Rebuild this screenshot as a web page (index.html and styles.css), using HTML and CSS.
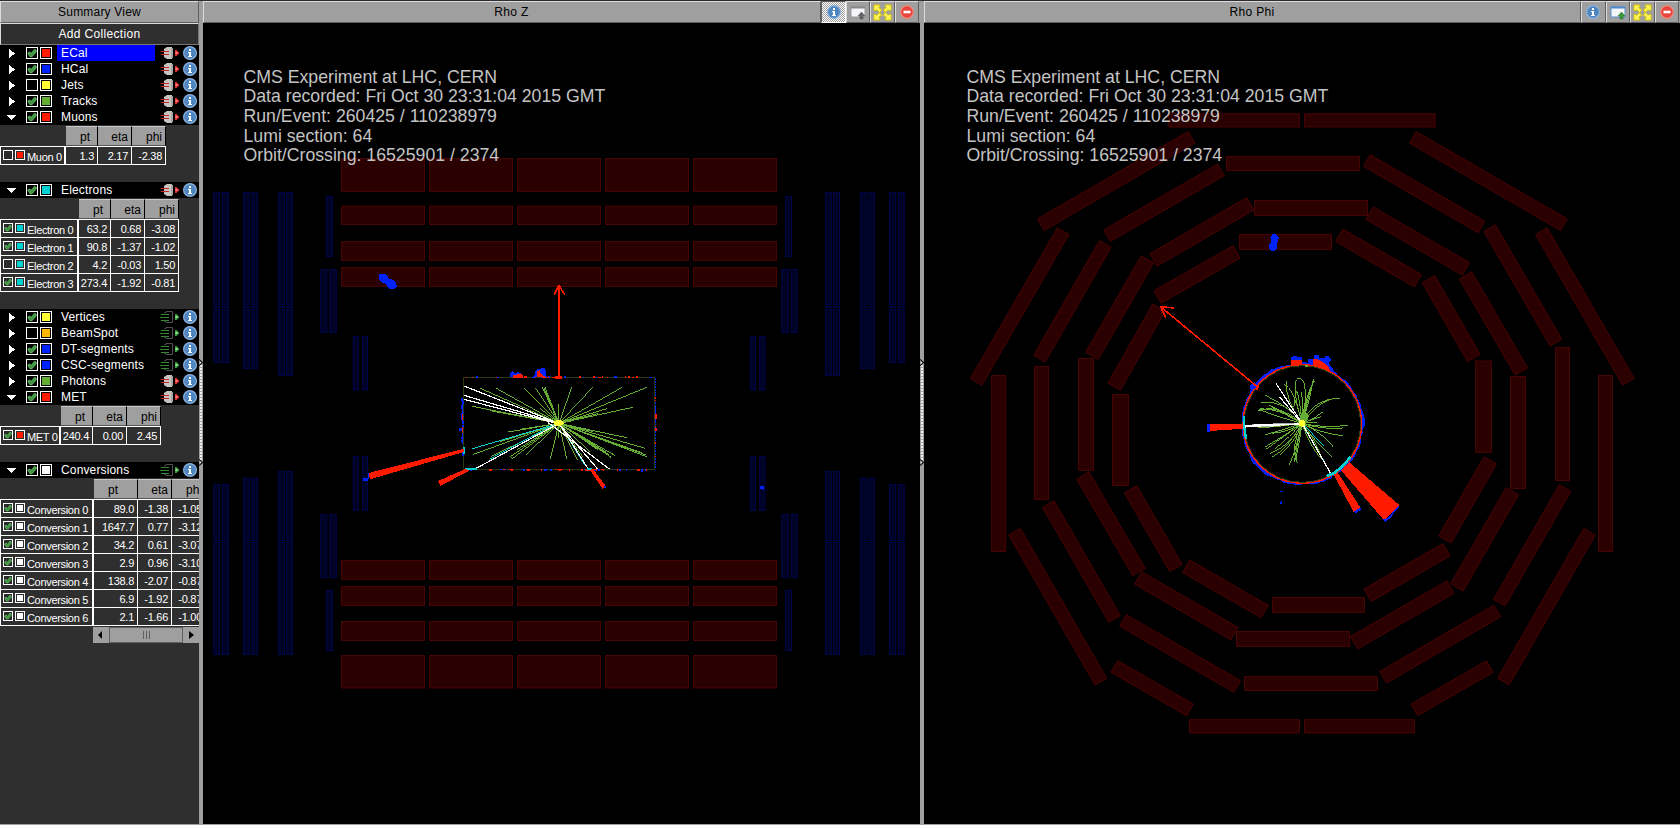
FILE: index.html
```html
<!DOCTYPE html>
<html lang="en">
<head>
<meta charset="utf-8">
<title>Event Display</title>
<link rel="stylesheet" href="styles.css">
</head>
<body>
<div class="app">
  <aside class="sidebar">
    <div class="bar title">Summary View</div>
    <button class="bar add">Add Collection</button>
    <div id="collections"></div>
  </aside>
  <div class="divider"><i class="grip"></i></div>
  <section class="pane pane-z">
    <header class="head"><span class="bar name">Rho Z</span><span class="tools" data-pressed="1"></span></header>
    <svg class="view" id="rhoz" viewBox="203 23 717 801"></svg>
  </section>
  <div class="divider"><i class="grip"></i></div>
  <section class="pane pane-phi">
    <header class="head"><span class="bar name">Rho Phi</span><span class="tools"></span></header>
    <svg class="view" id="rhophi" viewBox="924 23 756 801"></svg>
  </section>
</div>
<script src="app.js"></script>
</body>
</html>
```
FILE: styles.css
```css
* { box-sizing: border-box; }
body { margin: 0; background: #000; overflow: hidden; font: 12px/16px "Liberation Sans", Arial, sans-serif; }
.app { display: flex; width: 1680px; height: 825px; border-top: 1px solid #2f2b2f; border-bottom: 1px solid #9f9f9f; }
.sidebar { width: 199px; overflow: hidden; background: #2f2f2f; color: #fff; }
.bar { display: block; height: 22px; border: 1px solid; border-color: #dcdcdc #5f5f5f #5f5f5f #dcdcdc; background: #9f9f9f; color: #000; text-align: center; line-height: 20px; letter-spacing: .2px; }
.add { width: 199px; padding: 0; font: inherit; background: #2f2f2f; color: #fff; line-height: 19px; letter-spacing: .33px; border-color: #dcdcdc #777 #777 #dcdcdc; }
.divider { position: relative; width: 4px; background: #9f9f9f; }
.grip { position: absolute; left: 0; top: 361px; width: 4px; height: 101px; background: radial-gradient(circle at 1px 1px, #eee 0 .8px, transparent 1px) 1px 0 / 4px 3px; }
.grip::before, .grip::after { content: ""; position: absolute; left: -2px; width: 4px; height: 4px; border: 1px solid #000; border-width: 1px 1px 0 0; transform: rotate(45deg); }
.grip::before { top: -2px; }
.grip::after { bottom: -2px; }
.pane { display: flex; flex-direction: column; background: #000; }
.pane-z { width: 717px; }
.pane-phi { width: 756px; }
.head { display: flex; height: 22px; background: #9f9f9f; }
.name { flex: 1; letter-spacing: .35px; padding-right: 1px; }
.tools { display: flex; width: 99px; padding-right: 1px; }
.tool { flex: 1; height: 22px; border: 1px solid; border-color: #dcdcdc #5f5f5f #5f5f5f #dcdcdc; background: #9f9f9f; display: flex; align-items: center; justify-content: center; }
.tool.pressed { border-color: #5f5f5f #fff #fff #5f5f5f; background: repeating-conic-gradient(#fff 0 25%, #9f9f9f 0 50%) 0 0 / 2px 2px; }
.pressed .info { margin-left: 1px; }
.view { display: block; flex: 1; }
.row { display: flex; align-items: center; height: 16px; background: #000; padding: 0 2px 0 8px; }
.tri { width: 18px; height: 10px; }
.box { width: 12px; height: 12px; border: 1px solid #fff; background: #2a2a2a; display: block; flex: none; }
.row .box { background: #000; }
.box.color { margin-left: 2px; padding: 1px; background-clip: content-box; }
.row .box.color { background-clip: content-box; }
.box svg { display: block; width: 100%; height: 100%; }
.label { width: 98px; margin: 0 5px 0 5px; padding-left: 4px; letter-spacing: .15px; white-space: nowrap; }
.label.sel { background: #00f; }
.plug { width: 20px; height: 14px; margin-right: 3px; }
.info { width: 14px; height: 14px; flex: none; }
.grid { width: 206px; margin-bottom: 17px; }
.heads { display: flex; height: 21px; padding-top: 1px; }
.heads b { font-weight: normal; height: 20px; line-height: 21px; background: #9f9f9f; color: #000; text-align: right; padding-right: 3px; border-right: 1px solid #000; border-bottom: 1px solid #555; border-top: 1px solid #c8c8c8; }
.heads b:first-of-type { padding-right: 7px; }
.conv .heads b:first-of-type { padding-right: 19px; }
.cells { display: flex; height: 18px; font-size: 11px; letter-spacing: -.27px; line-height: 19px; }
.cells:nth-child(2) { height: 19px; }
.cells:nth-child(2) > * { border-top: 1px solid #fff; }
.cells > * { border-bottom: 1px solid #fff; border-right: 1px solid #fff; white-space: nowrap; }
.cells u { text-decoration: none; text-align: right; padding-right: 3px; }
.cells .who { display: flex; border-left: 1px solid #fff; border-right-width: 2px; padding-left: 2px; letter-spacing: -.32px; }
.who .box { width: 10px; height: 10px; margin-top: 3px; }
.who .box.color { margin-left: 2px; margin-right: 2px; }
.who span { position: relative; top: 1px; }
.scroll { display: flex; height: 16px; width: 106px; margin: -16px 0 0 93px; background: #9f9f9f; }
.scroll svg { width: 16px; height: 16px; }
.thumb { flex: 1; display: flex; gap: 2px; align-items: center; justify-content: center; border: 1px solid #5f5f5f; }
.thumb i { width: 1px; height: 8px; background: #5f5f5f; }
.event { font: 17.7px "Liberation Sans", Arial, sans-serif; fill: #c4c4c4; }
.dt { fill: #2b0000; stroke: #480303; stroke-width: 1; }
.csc { fill: #000326; stroke: #00064a; stroke-width: 1; }
.px { shape-rendering: crispEdges; }
.trk { fill: none; stroke: #66ad33; stroke-width: 3; }
.wt { fill: none; stroke: #fff; stroke-width: 3.6; }
.cy { fill: none; stroke: #00d2d2; stroke-width: 3; }
.rd { fill: #ff1a00; }
.bl { fill: #0022ff; }
```
FILE: app.js
```js
const CHECK = '<svg viewBox="0 0 10 10"><path d="M.8 5l2-1 1.500 1.500L7.500 1.300 9.400 2.500 9 4 5 8.700H3z" fill="#3c963c" stroke="#6dbb6d" stroke-width=".9"/></svg>';
const INFO = '<svg class="info" viewBox="0 0 14 14"><circle cx="7" cy="7" r="6.4" fill="#4f86c0" stroke="#8db4dc" stroke-width="1.2"/><path d="M6 3h2v2H6zM5 6h3v4h1v1H5v-1h1V7H5z" fill="#fff"/></svg>';
const plug = on => on
  ? '<svg class="plug" viewBox="0 0 20 14"><path d="M4 3l3-2h5v12H7l-3-2z" fill="#c8c4c0"/><path d="M11 2h2v10h-2z" fill="#aaa6a2"/><path d="M1 5.500h8M1 8.500h8" stroke="#c82828"/><path d="M15 4h1.500L19.500 7l-3 3H15z" fill="#e03030"/><path d="M15.500 6h2v2h-2z" fill="#ff8080"/></svg>'
  : '<svg class="plug" viewBox="0 0 20 14"><path d="M4 3l3-1.500h5.500v11H7l-3-1.500" fill="none" stroke="#505050"/><path d="M1 4.500h8M0 7.500h9M1 10.500h8" stroke="#2f8a2f"/><path d="M15 4h1.500L19.500 7l-3 3H15z" fill="#3fa03f"/><path d="M15.500 6h2v2h-2z" fill="#90e090"/></svg>';
const box = on => `<i class="box">${on ? CHECK : ''}</i>`;
const swatch = c => `<i class="box color" style="background-color:${c}"></i>`;

const R = '#ff1a00', B = '#0022ff', Y = '#ffff33', G = '#66ad33', C = '#00d2d2', O = '#ffb400', W = '#fff';
const collections = [
  { n: 'ECal', c: R, on: 1, live: 1, sel: 1 },
  { n: 'HCal', c: B, on: 1, live: 1 },
  { n: 'Jets', c: Y, on: 0, live: 1 },
  { n: 'Tracks', c: G, on: 1, live: 1 },
  { n: 'Muons', c: R, on: 1, live: 1, w: [66, 32, 34, 34], rows: [[0, 'Muon 0', '1.3', '2.17', '-2.38']] },
  { n: 'Electrons', c: C, on: 1, live: 1, w: [79, 32, 34, 34], rows: [
    [1, 'Electron 0', '63.2', '0.68', '-3.08'], [1, 'Electron 1', '90.8', '-1.37', '-1.02'],
    [0, 'Electron 2', '4.2', '-0.03', '1.50'], [1, 'Electron 3', '273.4', '-1.92', '-0.81']] },
  { n: 'Vertices', c: Y, on: 1 },
  { n: 'BeamSpot', c: O, on: 0 },
  { n: 'DT-segments', c: B, on: 1 },
  { n: 'CSC-segments', c: B, on: 1 },
  { n: 'Photons', c: G, on: 1, live: 1 },
  { n: 'MET', c: R, on: 1, live: 1, w: [61, 32, 34, 34], rows: [[1, 'MET 0', '240.4', '0.00', '2.45']] },
  { n: 'Conversions', c: W, on: 1, w: [94, 44, 34, 34], cls: 'conv', rows: [
    [1, 'Conversion 0', '89.0', '-1.38', '-1.05'], [1, 'Conversion 1', '1647.7', '0.77', '-3.12'],
    [1, 'Conversion 2', '34.2', '0.61', '-3.07'], [1, 'Conversion 3', '2.9', '0.96', '-3.10'],
    [1, 'Conversion 4', '138.8', '-2.07', '-0.87'], [1, 'Conversion 5', '6.9', '-1.92', '-0.87'],
    [1, 'Conversion 6', '2.1', '-1.66', '-1.00']] }
];
let out = '';
for (const k of collections) {
  const tri = k.rows ? 'M-2 3h10L3 8z' : 'M1 1l6 4.5-6 4.5z';
  out += `<div class="row"><svg class="tri px" viewBox="0 0 18 10" overflow="visible"><path d="${tri}" fill="#fff"/></svg>${box(k.on)}${swatch(k.c)}<span class="label${k.sel ? ' sel' : ''}">${k.n}</span>${plug(k.live)}${INFO}</div>`;
  if (!k.rows) continue;
  const w = i => `style="width:${k.w[i]}px"`;
  out += `<div class="grid ${k.cls || ''}"><div class="heads"><span ${w(0)}></span><b ${w(1)}>pt</b><b ${w(2)}>eta</b><b ${w(3)}>phi</b></div>`;
  for (const r of k.rows)
    out += `<div class="cells"><div class="who" ${w(0)}>${box(r[0])}${swatch(k.c)}<span>${r[1]}</span></div><u ${w(1)}>${r[2]}</u><u ${w(2)}>${r[3]}</u><u ${w(3)}>${r[4]}</u></div>`;
  out += '</div>';
}
out += '<div class="scroll"><svg viewBox="0 0 16 16"><path d="M9 4v8L5 8z"/></svg><div class="thumb"><i></i><i></i><i></i></div><svg viewBox="0 0 16 16"><path d="M6 4v8l5-4z"/></svg></div>';
document.getElementById('collections').innerHTML = out;

/* pane toolbars */
const arrow = '<path d="M1 1h6v2L6 4l3 2-2 3-3-3-1 1H1z"/>';
document.querySelectorAll('.tools').forEach(t => {
  const p = t.dataset.pressed;
  t.innerHTML = `<span class="tool${p ? ' pressed' : ''}">${INFO}</span>` +
    `<span class="tool"><svg width="16" height="15" viewBox="0 0 16 15"><path d="M1 2h14v10H1z" fill="#f4f6fa" stroke="${p ? '#999' : '#5a8fd0'}"/><path d="M1 1.5h14v2H1z" fill="${p ? '#888' : '#4f88cc'}"/><path d="M11.500 7l3.500 4h-2v3h-3v-3H8z" fill="${p ? '#666' : '#3c9a3c'}" stroke="${p ? '#555' : '#287028'}" stroke-width=".6"/></svg></span>` +
    `<span class="tool"><svg width="19" height="17" viewBox="0 0 20 18" fill="#fff45a" stroke="#d8c800" stroke-width="1">${arrow}<g transform="matrix(-1 0 0 1 20 0)">${arrow}</g><g transform="matrix(1 0 0 -1 0 18)">${arrow}</g><g transform="matrix(-1 0 0 -1 20 18)">${arrow}</g></svg></span>` +
    '<span class="tool"><svg width="14" height="14" viewBox="0 0 14 14"><circle cx="7" cy="7" r="6.3" fill="#e8453c" stroke="#f08a80" stroke-width="1.2"/><path d="M3.500 5.700h7v2.600h-7z" fill="#fff"/></svg></span>';
});

const eventText = x => ['CMS Experiment at LHC, CERN', 'Data recorded: Fri Oct 30 23:31:04 2015 GMT', 'Run/Event: 260425 / 110238979', 'Lumi section: 64', 'Orbit/Crossing: 16525901 / 2374']
  .map((s, i) => `<text class="event" x="${x}" y="${82.8 + i * 19.6}">${s}</text>`).join('');
const line = (c, a) => `<path class="${c}" d="M${a[0]} ${a[1]}L${a[2]} ${a[3]}"/>`;
const poly = (c, pts) => `<polygon class="${c}" points="${pts}"/>`;
let seed = 7;
const rnd = () => (seed = (seed * 16807) % 2147483647) / 2147483647;

/* Rho Z */
let z = '';
const rect = (c, x1, y1, x2, y2) => `<rect class="${c}" x="${x1 + .5}" y="${y1 + .5}" width="${x2 - x1 - 1}" height="${y2 - y1 - 1}"/>`;
for (const [y1, y2] of [[158, 192], [205.500, 225], [241, 261], [267, 287], [560, 580], [586, 606], [621, 641], [655, 688.500]])
  for (let i = 0; i < 5; i++) z += rect('dt', 341 + i * 88, y1, 425 + i * 88, y2);
const cscs = [];
for (const [xs, top, bot] of [[[[213.300, 220], [221.700, 229]], 363, 484], [[[243, 249.700], [251.300, 258]], 369, 477.500], [[[278, 285], [286.300, 293]], 376, 471]])
  for (const [a, b] of xs) cscs.push([a, 192, b, 305], [a, 306, b, top], [a, bot, b, 541], [a, 542, b, 655]);
cscs.push([326, 196, 333, 257], [326, 590, 333, 651]);
for (const [a, b] of [[320.300, 327.300], [329.300, 336.700]]) cscs.push([a, 269, b, 333], [a, 514, b, 578]);
for (const [a, b] of [[352.700, 358.700], [362, 368]]) cscs.push([a, 336, b, 390.500], [a, 456, b, 511]);
for (const [a, t, b, u] of cscs) z += rect('csc', a, t, b, u) + rect('csc', 1118 - b, t, 1118 - a, u);
z += '<g class="px">' +
  '<path class="bl" d="M379 274h6l3 2 1 3 5 1 2 3 1 3-2 3h-6l-2-3-2-3h-3l-3-4z"/>' +
  '<path class="bl" d="M363 478h5v3h-5zM760 486h4v4h-1l-1-1h-2z"/>' +
  '<g transform="translate(440 270) scale(.33333)">' +
  '<rect x="70.500" y="322.500" width="573" height="276" fill="none" stroke="#28380f" stroke-width="3"/>';
for (let i = 0; i < 75; i++) {
  const x = 75 + rnd() * 560, top = rnd() < .5, s = 3 + Math.floor(rnd() * 2) * 3;
  z += `<rect class="${rnd() < .5 ? 'rd' : 'bl'}" x="${x}" y="${(top ? 322 : 600) - s / 2}" width="${3 + rnd() * 4}" height="${s}"/>`;
}
for (const [a, b] of [[385, 458], [466, 520], [545, 556]])
  for (let y = a; y < b; y += 4) z += `<rect class="bl" x="${67 - rnd() * 3}" y="${y}" width="4" height="5"/>`;
for (let y = 325; y < 590; y += 8) z += `<rect class="${rnd() < .12 ? 'rd' : 'bl'}" x="644" y="${y}" width="3" height="5"/>`;
z += '<path class="bl" d="M645 405h4v50h-4zM645 468l8 10-8 12zM62 430h5v20h-5zM56 475h9v7h-9zM210 312l8-8 8 6 8-4 8 4 4 12h-34zM282 322l4-18 6-8 24-1 4 26zM604 597h6v9h-6z"/>' +
  '<path class="rd" d="M220 325v-9h8l4-4h12l5 6v6zM252 318h10v5h-10zM291 322v-19l10-3v9l10 8 8 6zM66 432h3v18h-3zM66 472h3v16h-3zM646 432h4v15h-4zM646 475h4v9h-4zM345 318h20v8h-20zM436 597h18v7h-18zM320 320h8v4h-8zM335 320h10v4h-10zM350 597h20v4h-20z"/>';
for (const [x, y] of [[121, 355], [169, 355], [253, 354], [257, 358], [287, 354], [307, 352], [315, 352], [311, 353], [395, 352], [458, 352], [546, 352], [620, 352], [578, 412], [500, 416], [97, 409], [140, 418], [150, 422], [205, 486], [180, 515], [100, 553], [211, 560], [217, 566], [230, 540], [257, 556], [331, 566], [380, 566], [412, 570], [428, 560], [560, 503], [616, 535], [618, 555], [620, 560], [610, 550], [524, 556], [514, 562], [508, 555], [498, 546], [355, 402], [354, 505], [450, 545], [475, 540], [460, 485], [152, 560], [300, 415], [325, 390], [475, 430], [400, 452], [240, 478]])
  z += line('trk', [357, 460, x, y]);
z += '<path class="trk" d="M213 562l4 4M506 556l7 7M516 550l8 8"/>';
for (const a of [[357, 460, 97, 536], [340, 464, 150, 567], [357, 460, 434, 585]]) z += line('cy', a);
for (const a of [[357, 460, 72, 348], [357, 460, 72, 376], [350, 460, 72, 388], [357, 460, 105, 597], [357, 460, 445, 597], [325, 458, 508, 597], [360, 465, 473, 597]]) z += line('wt', a);
z += '<ellipse cx="356" cy="459" rx="16" ry="9" fill="#ffff33"/>' +
  '<path d="M69 532h6v20h-6zM76 594h34v6H76zM440 594h16v6h-16z" fill="#00d2d2"/>' +
  poly('rd', '72,536 72,546 -210,628 -214,609') + poly('rd', '76,597 88,602 1,648 -6,633') + poly('rd', '450,599 459,597 497,648 487,656') +
  '<path class="bl" d="M493 648h6v4l-6 3zM-216 610h3v17h-3z"/><path d="M357 324V50" stroke="#ff1a00" stroke-width="6"/><path d="M357 46l-15 28M357 46l17 28" stroke="#ff1a00" stroke-width="5"/></g></g>';
z += eventText(243.5);
document.getElementById('rhoz').innerHTML = z;

/* Rho Phi: chambers as centre lines, in thirds of a pixel from each quadrant's corner */
let p = '';
const bar = (x1, y1, x2, y2, w) => {
  const L = Math.hypot(x2 - x1, y2 - y1), ux = (x2 - x1) / L, uy = (y2 - y1) / L, h = w / 2 - .5;
  x1 += ux / 2; y1 += uy / 2; x2 -= ux / 2; y2 -= uy / 2;
  const nx = -uy * h, ny = ux * h;
  p += poly('dt', [[x1 + nx, y1 + ny], [x2 + nx, y2 + ny], [x2 - nx, y2 - ny], [x1 - nx, y1 - ny]].map(a => a.map(v => v.toFixed(2))).join(' '));
};
const quadrants = [
  [920, 90, [[745, 91, 1140, 91, 43], [361, 405, 816, 141, 43], [430.5, 422, 167.5, 877, 43], [556.5, 460.5, 357.5, 807.5, 43], [559.5, 438, 904.5, 238.5, 43], [683, 507, 515, 799, 46], [699.5, 510.5, 992, 340.5, 46], [717.5, 651, 582, 891.5, 46], [711.5, 621.5, 951, 485, 46]]],
  [1280, 90, [[72, 91, 467, 91, 43], [783, 422, 1046, 877, 43], [397, 141, 853, 405, 43], [259.5, 211, 605.5, 411.5, 43], [628, 413, 828.5, 759, 43], [267, 368.5, 559.5, 537.5, 46], [556, 555, 725, 846, 46], [176, 435, 415, 573, 46], [444.5, 566, 582.5, 805.5, 46]]],
  [920, 400, [[283, 394, 543.5, 846.5, 43], [581.5, 798.5, 811.5, 930.5, 43], [807, 979, 1140, 979, 43], [607.5, 660.5, 953, 860.5, 43], [384, 311, 584.5, 658, 43], [653, 533, 945, 702, 46], [487.5, 225, 657.5, 517, 46], [797, 498, 1035.5, 635.5, 46], [631, 266.5, 768.5, 505, 46]]],
  [1280, 400, [[72, 979, 405, 979, 43], [630.5, 799, 402, 930, 43], [929.5, 394, 669.5, 846, 43], [856, 262.5, 657, 609.5, 43], [653, 632.5, 308, 832.5, 43], [698, 272, 530, 563.5, 46], [513, 560.5, 221, 729, 46], [631.5, 180, 494, 420, 46], [500.5, 448.5, 261.5, 586.5, 46]]]
];
for (const [ox, oy, list] of quadrants) for (const [a, b, c, d, w] of list) bar(ox + a / 3, oy + b / 3, ox + c / 3, oy + d / 3, w / 3);
for (const a of [[998.6, 375, 998.6, 552, 15], [1605.5, 375, 1605.5, 552, 15], [1226, 163.5, 1360, 163.5, 15], [1562.5, 347, 1562.5, 481, 15], [1244, 683.5, 1378, 683.5, 15], [1041.5, 366, 1041.5, 500, 15],
  [1254, 208, 1368, 208, 16], [1518, 376, 1518, 489, 16], [1236, 639, 1350, 639, 16], [1086, 358, 1086, 471, 16],
  [1239, 242, 1332, 242, 16], [1483.5, 360.5, 1483.5, 453, 17], [1272, 605, 1365, 605, 16], [1120.5, 394, 1120.5, 486, 17]]) bar(...a);
p += '<g class="px"><path class="bl" d="M1272 234h4l1 2 2 1-1 4-1 2v5l-2 3h-4l-2-3v-4l2-2v-3l-1-2 2-1z"/>' +
  '<g transform="translate(1180 290) scale(.33333)">';
let ring = '';
for (let a = 0; a < 360; a += 3) {
  const t = a * Math.PI / 180;
  const r = 181.5 + Math.floor(rnd() * 3) * 1.5 + (a > 120 && a < 150 ? 4 : 0) + (a > 350 || a < 2 ? 5 : 0) + (a > 212 && a < 250 ? 4 : 0);
  ring += `${(367 + r * Math.cos(t)).toFixed(1)},${(402 + r * Math.sin(t)).toFixed(1)} `;
}
p += poly('bl', ring) +
  '<path class="bl" d="M333 222v-20h5v-4h12v4h15v12l10 3 8 1v-12h19v-10h15v8h19v-6h12v6h6v8l-8 8 12 15 6 14-12 6z"/>' +
  '<path class="rd" d="M333 230v-20h33v14l12 2 20-2v-18l14 2 12 5 22 17 6 13-12-4z"/>' +
  '<circle cx="367" cy="402" r="177.500" fill="none" stroke="#ff1a00" stroke-width="4.500"/><circle cx="367" cy="402" r="175" fill="#000" stroke="#30400f" stroke-width="3"/>' +
  '<path d="M375 224h9v6h-9z" fill="#66ad33"/><path class="bl" d="M209 298l3-16h11v-5l10 6-9 14z"/><path class="rd" d="M226 290l12-8-2 12-6 8z"/>' +
  '<path d="M234 292L-56 52" stroke="#ff1a00" stroke-width="5"/><path d="M-18 54L-58 50L-43 83" fill="none" stroke="#ff1a00" stroke-width="5"/>' +
  poly('rd', '90,402 192,402 192,416 90,423') + '<path class="bl" d="M81 402h9v24h-9z"/>' +
  poly('rd', '460,552 472,546 543,655 522,668') + poly('rd', '483,541 508,517 658,645 613,692') +
  '<path class="bl" d="M521 665l19-11 6 3-20 13zM610 688l14-4 26-32 9-8-2 9-18 18-3 8-19 17zM300 603h9v3h-9zM300 637l6-4v9h-6z"/>';
const curves = ['380,330 402,268', '390,330 400,268', '350,240 342,350', '385,300 375,270 358,264', '315,330 319,273', '340,290 311,283', '340,310 340,270 356,265', '400,325 480,325', '330,350 256,316', '320,330 244,337', '300,340 234,361', '300,355 240,356', '290,380 236,358', '300,410 235,414', '310,420 256,434', '310,440 254,472', '330,470 270,490', '320,480 275,502', '345,490 328,524', '330,470 352,518', '350,460 343,517', '330,440 284,478', '310,440 258,478', '430,415 503,406', '430,420 488,414', '420,430 488,437', '430,430 461,472', '410,460 455,500', '390,470 424,506', '400,440 420,490', '360,450 347,510', '390,390 422,380', '400,350 450,328', '380,300 404,272', '320,370 268,345', '330,380 275,352', '400,390 430,365', '370,340 364,305', '378,350 388,310', '385,395 410,397', '330,425 275,430', '350,450 300,495'];
for (const c of curves) {
  const a = c.split(' ');
  p += `<path class="trk" d="M366 400${a.length === 3 ? 'C' : 'Q'}${a.join(' ')}"/>`;
}
p += '<path d="M366 400l-5-20 8-24 8 10 10 12-8 20z" fill="#66ad33"/>';
for (const a of [[366, 400, 432, 467], [375, 418, 435, 518]]) p += line('cy', a);
for (const a of [[366, 400, 288, 280], [366, 400, 298, 320], [366, 400, 452, 550], [366, 402, 195, 406], [300, 404, 195, 411]]) p += line('wt', a);
p += '<path d="M366 400L280 402 195 406v3l90-1z" fill="#fff" stroke="#fff" stroke-width="2"/><circle cx="366" cy="400" r="10" fill="#ffff33"/>' +
  '<path d="M193 378v35l5 33" fill="none" stroke="#00d2d2" stroke-width="7"/><path d="M439 558l22-8 28-22 22-27" fill="none" stroke="#00d2d2" stroke-width="8"/></g></g>';
p += eventText(966.5);
document.getElementById('rhophi').innerHTML = p;
```
